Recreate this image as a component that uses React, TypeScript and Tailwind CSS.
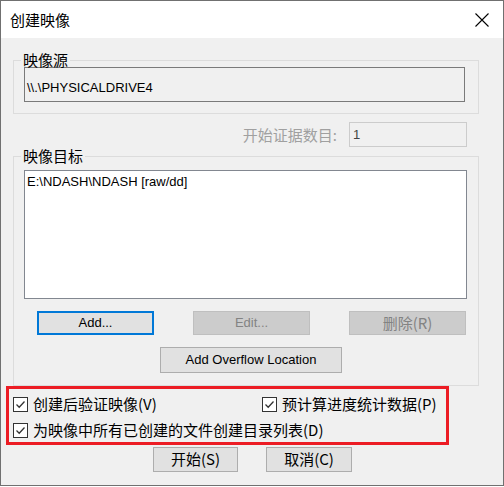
import React from 'react';

const CJK = "font-['Noto_Sans_CJK_SC','Noto_Sans_CJK_JP',sans-serif]";
const LATIN = "font-['Liberation_Sans',Arial,sans-serif]";

const GroupBox: React.FC<{ title: string; children: React.ReactNode; className?: string }> = ({ title, children, className }) => (
  <fieldset className={`ml-[12px] w-[466px] border border-[#dcdcdc] ${className ?? ''}`}>
    <legend className={`ml-[7px] px-[2px] text-[15px] leading-[20px] text-black ${CJK}`}>{title}</legend>
    {children}
  </fieldset>
);

const Button: React.FC<{
  children: React.ReactNode;
  className?: string;
  disabled?: boolean;
  focused?: boolean;
}> = ({ children, className, disabled, focused }) => {
  const tone = disabled
    ? 'bg-[#cccccc] border border-[#bfbfbf] text-[#838383]'
    : focused
      ? 'bg-[#e1e1e1] border-2 border-[#0078d7] text-black'
      : 'bg-[#e1e1e1] border border-[#adadad] text-black';
  return (
    <button disabled={disabled} className={`flex items-center justify-center ${tone} ${className ?? ''}`}>
      {children}
    </button>
  );
};

const CheckBox: React.FC<{ label: string; hotkey: string; className?: string }> = ({ label, hotkey, className }) => (
  <label className={`flex h-[16px] items-center ${className ?? ''}`}>
    <span className="flex h-[15px] w-[15px] shrink-0 items-center justify-center border border-[#333333] bg-white">
      <svg width="13" height="13" viewBox="0 0 13 13">
        <polyline points="2.5,6.5 5.2,9.2 10.5,3.5" fill="none" stroke="#333333" strokeWidth="1.3" />
      </svg>
    </span>
    <span className={`ml-[5px] whitespace-nowrap text-[15px] leading-[20px] text-black ${CJK}`}>
      {label}({hotkey})
    </span>
  </label>
);

export default function App() {
  return (
    <div className="h-[487px] w-[504px] bg-white">
      <div className="flex h-[486px] w-[504px] flex-col border border-[#707070] bg-[#f0f0f0]">
        {/* title bar */}
        <div className="flex h-[37px] shrink-0 items-center justify-between bg-white pl-[9px] pr-[14px]">
          <span className={`text-[15px] leading-[20px] text-black ${CJK}`}>创建映像</span>
          <svg width="14" height="14" viewBox="0 0 14 14">
            <path d="M0.5 0.5 L13.5 13.5 M13.5 0.5 L0.5 13.5" stroke="#000" strokeWidth="1.1" fill="none" />
          </svg>
        </div>

        {/* source */}
        <GroupBox title="映像源" className="mt-[12px] pb-[11px]">
          <div className={`-mt-[3px] ml-[10px] h-[35px] w-[441px] border border-[#7a7a7a] bg-[#f0f0f0] pl-[2px] pt-[12px] text-[13px] leading-[16px] text-black ${LATIN}`}>
            \\.\PHYSICALDRIVE4
          </div>
        </GroupBox>

        {/* evidence number */}
        <div className="mt-[8px] flex items-center justify-end gap-[12px] pr-[36px]">
          <span className={`text-[15px] leading-[20px] text-[#a0a0a0] ${CJK}`}>开始证据数目:</span>
          <div className={`flex h-[25px] w-[118px] items-center border border-[#cccccc] bg-[#f0f0f0] pl-[3px] text-[13px] text-[#444444] ${LATIN}`}>
            1
          </div>
        </div>

        {/* destination */}
        <GroupBox title="映像目标" className="-mt-[1px] pb-[12px]">
          <div className={`ml-[10px] mt-[4px] h-[129px] w-[443px] border border-[#828790] bg-white pl-[2px] pt-[3px] text-[13px] leading-[16px] text-black ${LATIN}`}>
            E:\NDASH\NDASH [raw/dd]
          </div>
          <div className={`ml-[23px] mt-[12px] flex gap-[39px] text-[13px] ${LATIN}`}>
            <Button focused className="h-[24px] w-[117px]">Add...</Button>
            <Button disabled className="h-[24px] w-[117px]">Edit...</Button>
            <Button disabled className={`h-[24px] w-[117px] text-[15px] ${CJK}`}>删除(R)</Button>
          </div>
          <Button className={`ml-[146px] mt-[12px] h-[26px] w-[182px] text-[13px] ${LATIN}`}>Add Overflow Location</Button>
        </GroupBox>

        {/* options */}
        <div className="ml-[5px] h-[59px] w-[443px] border-[3px] border-[#ec1c24] pl-[4px] pt-[7px]">
          <div className="flex">
            <CheckBox label="创建后验证映像" hotkey="V" className="w-[249px]" />
            <CheckBox label="预计算进度统计数据" hotkey="P" />
          </div>
          <CheckBox label="为映像中所有已创建的文件创建目录列表" hotkey="D" className="mt-[10px]" />
        </div>

        <div className={`ml-[152px] mt-[2px] flex gap-[28px] text-[15px] ${CJK}`}>
          <Button className="h-[25px] w-[85px]">开始(S)</Button>
          <Button className="h-[25px] w-[86px]">取消(C)</Button>
        </div>
      </div>
    </div>
  );
}
